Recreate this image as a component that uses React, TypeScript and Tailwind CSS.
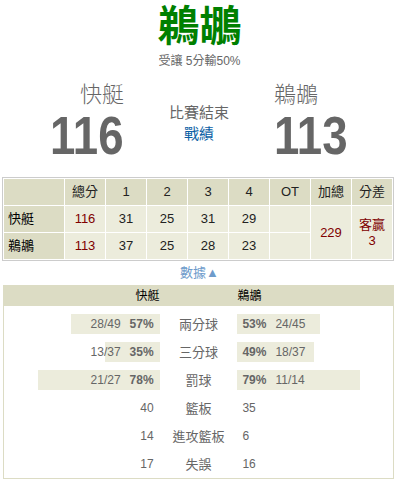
import React from "react";

const cjk = "font-['Liberation_Sans','Noto_Sans_CJK_TC',sans-serif]";

const bars = [
  { label: "兩分球", l: "28/49", lp: 57, r: "24/45", rp: 53 },
  { label: "三分球", l: "13/37", lp: 35, r: "18/37", rp: 49 },
  { label: "罰球", l: "21/27", lp: 78, r: "11/14", rp: 79 },
];

const plain = [
  { label: "籃板", l: "40", r: "35" },
  { label: "進攻籃板", l: "14", r: "6" },
  { label: "失誤", l: "17", r: "16" },
];

function H({ children }: { children?: React.ReactNode }) {
  return (
    <div className="bg-[#dcdcc4] flex items-center justify-center text-[13px] text-[#222]">
      {children}
    </div>
  );
}

function C({ children, red, cls = "" }: { children?: React.ReactNode; red?: boolean; cls?: string }) {
  return (
    <div
      className={`bg-[#ececdc] flex items-center justify-center text-[13px] ${
        red ? "text-[#800000]" : "text-[#222]"
      } ${cls}`}
    >
      {children}
    </div>
  );
}

export default function App() {
  return (
    <div className={`w-[399px] h-[485px] bg-white ${cjk} overflow-hidden`}>
      <div className="h-[45px] text-center text-[42px] leading-[45px] font-bold text-[#008000] font-['Noto_Sans_CJK_TC',sans-serif]">
        鵜鶘
      </div>
      <div className="mt-[8px] text-center text-[12px] leading-[16px] text-[#666]">受讓 5分輸50%</div>

      <div className="mt-[13px] flex">
        <div className="w-[124px] text-right">
          <div className="text-[22px] leading-[26px] text-[#666] font-light">快艇</div>
          <div className="mt-[6px] h-[44px] text-[53px] leading-[44px] font-bold text-[#666]">
            <span className="inline-block origin-right scale-x-[0.86]">116</span>
          </div>
        </div>
        <div className="w-[150px] text-center pt-[20px]">
          <div className="text-[15px] leading-[21px] text-[#666]">比賽結束</div>
          <div className="text-[15px] leading-[21px] text-[#0b5fa5]">戰績</div>
        </div>
        <div className="flex-1 text-left">
          <div className="text-[22px] leading-[26px] text-[#666] font-light">鵜鶘</div>
          <div className="mt-[6px] h-[44px] text-[53px] leading-[44px] font-bold text-[#666]">
            <span className="inline-block origin-left scale-x-[0.86]">113</span>
          </div>
        </div>
      </div>

      <div className="mt-[19px] ml-[2px] w-[392px] grid grid-cols-[60px_repeat(8,40px)] grid-rows-[26px_26px_26px] gap-px bg-white p-px border border-[#cccccc]">
        <H />
        <H>總分</H>
        <H>1</H>
        <H>2</H>
        <H>3</H>
        <H>4</H>
        <H>OT</H>
        <H>加總</H>
        <H>分差</H>

        <div className="bg-[#dcdcc4] flex items-center pl-[4px] text-[13px] text-black">快艇</div>
        <C red>116</C>
        <C>31</C>
        <C>25</C>
        <C>31</C>
        <C>29</C>
        <C />
        <C red cls="row-span-2">229</C>
        <C red cls="row-span-2 flex-col leading-[16px]">
          <span>客贏</span>
          <span>3</span>
        </C>

        <div className="bg-[#dcdcc4] flex items-center pl-[4px] text-[13px] text-black">鵜鶘</div>
        <C red>113</C>
        <C>37</C>
        <C>25</C>
        <C>28</C>
        <C>23</C>
        <C />
      </div>

      <div className="mt-[4px] text-center text-[13px] leading-[16px] text-[#6e9bcb]">數據▲</div>

      <div className="mt-[4px] ml-[3px] w-[391px] border border-[#dcdcc4]">
        <div className="grid grid-cols-[2fr_1fr_2fr] h-[20px] bg-[#dcdcc4] text-[12px] text-black items-center">
          <div className="text-right">快艇</div>
          <div />
          <div className="text-left">鵜鶘</div>
        </div>
        <div className="pt-[4px]">
          {bars.map((b) => (
            <div key={b.label} className="grid grid-cols-[2fr_1fr_2fr] h-[28px] text-[12px] text-[#666]">
              <div className="relative flex items-center justify-end pr-[6px]">
                <div className="absolute right-0 top-[4px] h-[20px] bg-[#ececdc]" style={{ width: `${b.lp}%` }} />
                <span className="relative">{b.l}</span>
                <span className="relative ml-[9px] font-bold">{b.lp}%</span>
              </div>
              <div className="flex items-center justify-center text-[13px] pt-[2px]">{b.label}</div>
              <div className="relative flex items-center pl-[5px]">
                <div className="absolute left-0 top-[4px] h-[20px] bg-[#ececdc]" style={{ width: `${b.rp}%` }} />
                <span className="relative font-bold">{b.rp}%</span>
                <span className="relative ml-[9px]">{b.r}</span>
              </div>
            </div>
          ))}
          {plain.map((p) => (
            <div key={p.label} className="grid grid-cols-[2fr_1fr_2fr] h-[28px] text-[12px] text-[#666]">
              <div className="flex items-center justify-end pr-[6px]">{p.l}</div>
              <div className="flex items-center justify-center text-[13px] pt-[2px]">{p.label}</div>
              <div className="flex items-center pl-[5px]">{p.r}</div>
            </div>
          ))}
        </div>
      </div>
    </div>
  );
}
